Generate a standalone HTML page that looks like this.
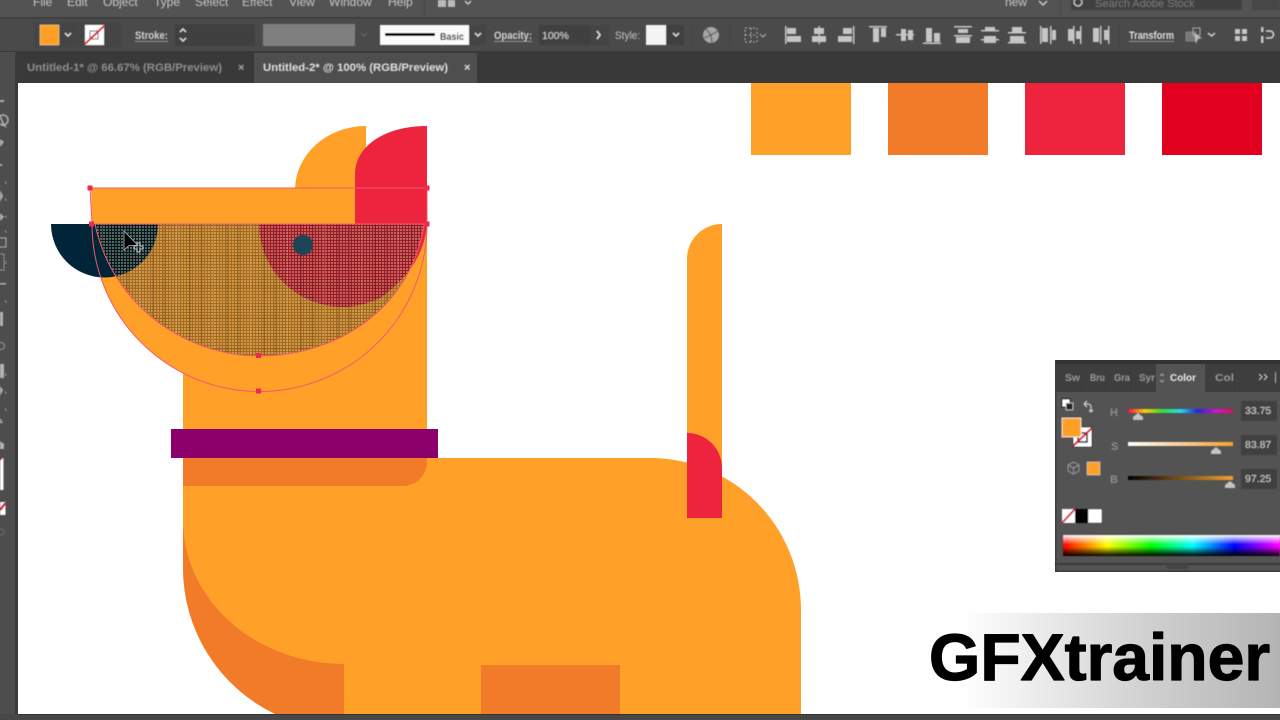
<!DOCTYPE html>
<html><head><meta charset="utf-8"><style>
html,body{margin:0;padding:0;width:1280px;height:720px;overflow:hidden;background:#4a4a4a}
svg{display:block}
text{font-family:"Liberation Sans",sans-serif}
</style></head><body>
<svg width="1280" height="720" viewBox="0 0 1280 720" xmlns="http://www.w3.org/2000/svg">
<defs>
<pattern id="h" width="3" height="3" patternUnits="userSpaceOnUse"><rect width="3" height="3" fill="rgba(0,0,0,.34)"/><rect x="1" y="1" width="2" height="2" fill="rgba(255,235,170,.36)"/></pattern>
<pattern id="pv" width="37" height="3" patternUnits="userSpaceOnUse"><rect x="4" width="2" height="3" fill="rgba(0,0,0,.12)"/><rect x="15" width="3" height="3" fill="rgba(0,0,0,.08)"/><rect x="28" width="1" height="3" fill="rgba(255,255,255,.12)"/></pattern>
<pattern id="ph" width="3" height="31" patternUnits="userSpaceOnUse"><rect y="7" width="3" height="2" fill="rgba(0,0,0,.06)"/><rect y="21" width="3" height="1" fill="rgba(255,255,255,.08)"/></pattern>
<linearGradient id="wm"><stop offset="0" stop-color="#fff"/><stop offset=".6" stop-color="#cfcfcf"/><stop offset="1" stop-color="#b4b4b4"/></linearGradient>
<linearGradient id="hue"><stop offset="0" stop-color="#f00"/><stop offset=".17" stop-color="#ff0"/><stop offset=".34" stop-color="#0f0"/><stop offset=".5" stop-color="#0ff"/><stop offset=".66" stop-color="#00f"/><stop offset=".83" stop-color="#f0f"/><stop offset="1" stop-color="#f00"/></linearGradient>
<linearGradient id="wb" x2="0" y2="1"><stop offset="0" stop-color="#fff"/><stop offset=".45" stop-color="#fff" stop-opacity="0"/><stop offset=".55" stop-color="#000" stop-opacity="0"/><stop offset="1" stop-color="#000"/></linearGradient>
<linearGradient id="hs"><stop offset="0" stop-color="#f0104a"/><stop offset=".16" stop-color="#fc0"/><stop offset=".33" stop-color="#3d3"/><stop offset=".5" stop-color="#2de"/><stop offset=".66" stop-color="#22d"/><stop offset=".85" stop-color="#d1c"/><stop offset="1" stop-color="#e01060"/></linearGradient>
<linearGradient id="ss"><stop offset="0" stop-color="#fff"/><stop offset="1" stop-color="#f7a030"/></linearGradient>
<linearGradient id="bs"><stop offset="0" stop-color="#000"/><stop offset="1" stop-color="#f7a030"/></linearGradient>
<clipPath id="hc"><path d="M95 224H424C412 306 340 356 259 356C185 356 112 305 95 224Z"/></clipPath>
<filter id="b" x="-5%" y="-5%" width="110%" height="110%"><feGaussianBlur stdDeviation=".45"/></filter>
</defs>

<!-- chrome -->
<rect width="1280" height="720" fill="#4a4a4a"/>
<rect width="1280" height="17" fill="#535353"/>
<rect y="17" width="1280" height="1.5" fill="#3d3d3d"/>
<rect y="51" width="1280" height="32" fill="#393939"/>
<rect x="0" y="52" width="16" height="668" fill="#4d4d4d"/>
<rect x="15" y="53" width="3" height="667" fill="#3a3a3a"/>
<rect x="254" y="53" width="223" height="30" fill="#4e4e4e"/>

<g filter="url(#b)">
<g fill="#c8c8c8" font-size="12">
<text x="33" y="6">File</text><text x="67" y="6">Edit</text><text x="103" y="6">Object</text><text x="154" y="6">Type</text><text x="195" y="6">Select</text><text x="242" y="6">Effect</text><text x="289" y="6">View</text><text x="329" y="6">Window</text><text x="388" y="6">Help</text>
<text x="1005" y="6">new</text>
</g>
<rect x="424" y="0" width="1" height="16" fill="#444"/>
<path d="M438 0h8v7h-8zM448 0h7v7h-7z" fill="#bbb"/>
<path d="M465 1l3 3 3-3M1039 1l4 4 4-4" stroke="#ccc" stroke-width="1.5" fill="none"/>
<rect x="1071" y="-4" width="171" height="14" rx="2" fill="#404040"/>
<text x="1095" y="7" font-size="11" fill="#777">Search Adobe Stock</text>
<circle cx="1078" cy="2" r="4" stroke="#bbb" stroke-width="1.5" fill="none"/>
<rect x="1252" y="-4" width="28" height="14" fill="#474747"/>
<rect x="1060" y="0" width="1" height="16" fill="#444"/>

<!-- control bar -->
<rect x="34" y="23" width="44" height="24" fill="#454545"/>
<rect x="40" y="25" width="19" height="20" fill="#ffa028" stroke="#f4e0c0" stroke-width=".5"/>
<path d="M65 33l3 3 3-3M111 33l3 3 3-3M242 33l3 3 3-3M475 33l3 3 3-3M673 33l3 3 3-3" stroke="#ddd" stroke-width="1.5" fill="none"/>
<rect x="79" y="23" width="42" height="24" fill="#454545"/>
<rect x="85" y="25" width="19" height="20" fill="#fff"/>
<rect x="90" y="31" width="8" height="8" fill="none" stroke="#555"/>
<path d="M85 44L104 26" stroke="#e01030" stroke-width="2"/>
<text x="135" y="39" font-size="11" font-weight="bold" fill="#d4d4d4" textLength="33" lengthAdjust="spacingAndGlyphs">Stroke:</text>
<rect x="135" y="41" width="33" height=".8" fill="#aaa"/>
<rect x="175" y="24" width="80" height="22" fill="#404040"/>
<path d="M180 32l3-3 3 3M180 38l3 3 3-3" stroke="#ddd" stroke-width="1.4" fill="none"/>
<rect x="263" y="24" width="92" height="22" fill="#7f7f7f"/>
<path d="M361 33l3 3 3-3" stroke="#5e5e5e" stroke-width="1.5" fill="none"/>
<rect x="380" y="25" width="89" height="20" fill="#fbfbfb"/>
<rect x="385" y="33" width="50" height="3" fill="#000"/>
<text x="440" y="40" font-size="10.5" font-weight="bold" fill="#222" textLength="24" lengthAdjust="spacingAndGlyphs">Basic</text>
<rect x="469" y="25" width="17" height="20" fill="#454545"/>
<path d="M475 33l3 3 3-3" stroke="#ddd" stroke-width="1.5" fill="none"/>
<text x="494" y="39" font-size="11" font-weight="bold" fill="#d4d4d4" textLength="38" lengthAdjust="spacingAndGlyphs">Opacity:</text>
<rect x="494" y="41" width="38" height=".8" fill="#aaa"/>
<rect x="539" y="25" width="52" height="20" fill="#404040"/>
<text x="542" y="39" font-size="10.5" fill="#d4d4d4">100%</text>
<rect x="591" y="25" width="18" height="20" fill="#454545"/>
<path d="M597 31l3 4-3 4" stroke="#ddd" stroke-width="1.5" fill="none"/>
<text x="615" y="39" font-size="11" fill="#c4c4c4" textLength="25" lengthAdjust="spacingAndGlyphs">Style:</text>
<rect x="646" y="25" width="20" height="20" fill="#f4f4f4"/>
<rect x="666" y="25" width="18" height="20" fill="#404040"/>
<path d="M673 33l3 3 3-3" stroke="#ddd" stroke-width="1.5" fill="none"/>
<rect x="692" y="23" width="1" height="24" fill="#444"/>
<circle cx="711" cy="35" r="8" fill="#a6a6a6"/><path d="M711 35L706 29M711 35L718 31M711 35L712 43M711 35L704 38" stroke="#5c5c5c" stroke-width="1.2"/>
<rect x="730" y="23" width="1" height="24" fill="#444"/>
<rect x="745" y="28" width="12" height="14" fill="none" stroke="#b5b5b5" stroke-dasharray="2 2"/><path d="M751 28v14M745 35h12" stroke="#b5b5b5" stroke-dasharray="2 2"/>
<path d="M760 34l3 3 3-3" stroke="#aaa" stroke-width="1.2" fill="none"/>

<!-- align icons -->
<g fill="#c6c6c6">
<rect x="785" y="26" width="1.5" height="18"/><rect x="787" y="28" width="9" height="6"/><rect x="787" y="36" width="14" height="6"/>
<rect x="818.500" y="26" width="1.500" height="18"/><rect x="814" y="28" width="10" height="6"/><rect x="812" y="36" width="14" height="6"/>
<rect x="853" y="26" width="1.500" height="18"/><rect x="843" y="28" width="9" height="6"/><rect x="838" y="36" width="14" height="6"/>
<rect x="869" y="26" width="18" height="1.500"/><rect x="873" y="28" width="6" height="14"/><rect x="881" y="28" width="5" height="9"/>
<rect x="896" y="34" width="18" height="1.500"/><rect x="901" y="29" width="5" height="12"/><rect x="908" y="30" width="5" height="10"/>
<rect x="923" y="42.500" width="18" height="1.500"/><rect x="926" y="28" width="6" height="14"/><rect x="934" y="33" width="6" height="9"/>
<rect x="954" y="26" width="18" height="1.500"/><rect x="958" y="29" width="10" height="4"/><rect x="954" y="35" width="18" height="1.500"/><rect x="956" y="37" width="14" height="6"/>
<rect x="981" y="30" width="18" height="1.500"/><rect x="985" y="27" width="10" height="3"/><rect x="981" y="39" width="18" height="1.500"/><rect x="984" y="36" width="12" height="7"/>
<rect x="1008" y="32" width="18" height="1.500"/><rect x="1012" y="27" width="10" height="5"/><rect x="1008" y="42" width="18" height="1.500"/><rect x="1010" y="36" width="14" height="6"/>
<rect x="1040" y="26" width="1.500" height="18"/><rect x="1042" y="28" width="6" height="14"/><rect x="1050" y="26" width="1.500" height="18"/><rect x="1052" y="30" width="4" height="10"/>
<rect x="1073" y="26" width="1.500" height="18"/><rect x="1068" y="29" width="5" height="12"/><rect x="1080" y="26" width="1.500" height="18"/><rect x="1076" y="31" width="4" height="8"/>
<rect x="1093" y="28" width="6" height="14"/><rect x="1100" y="26" width="1.500" height="18"/><rect x="1104" y="30" width="4" height="10"/><rect x="1108" y="26" width="1.500" height="18"/>
<rect x="1235" y="29" width="5" height="5"/><rect x="1242" y="29" width="5" height="5"/><rect x="1235" y="36" width="5" height="5"/><rect x="1242" y="36" width="5" height="5"/>
<rect x="1261" y="27" width="2.500" height="5"/><rect x="1261" y="36" width="2.500" height="7"/>
</g>
<path d="M1266 31h4a3.500 3.500 0 0 1 0 7h-4" fill="none" stroke="#c6c6c6" stroke-width="1.800"/>
<rect x="1119" y="23" width="1" height="24" fill="#444"/>
<text x="1129" y="39" font-size="11" font-weight="bold" fill="#e0e0e0" textLength="45" lengthAdjust="spacingAndGlyphs">Transform</text>
<rect x="1129" y="41" width="45" height=".8" fill="#aaa"/>
<rect x="1186" y="32" width="10" height="9" fill="#777" stroke="#999" stroke-width=".6"/>
<rect x="1193" y="28" width="7" height="7" fill="none" stroke="#aaa"/>
<path d="M1194 33l8 5-4 1-2 5z" fill="#bbb"/>
<path d="M1208 33l3.500 3 3.500-3" stroke="#ccc" stroke-width="1.500" fill="none"/>

<!-- tabs -->
<text x="27" y="71" font-size="11" font-weight="bold" fill="#8f8f8f" textLength="195" lengthAdjust="spacingAndGlyphs">Untitled-1* @ 66.67% (RGB/Preview)</text>
<text x="238" y="71" font-size="11" font-weight="bold" fill="#a8a8a8">×</text>
<text x="263" y="71" font-size="11" font-weight="bold" fill="#e2e2e2" textLength="185" lengthAdjust="spacingAndGlyphs">Untitled-2* @ 100% (RGB/Preview)</text>
<text x="464" y="71" font-size="11" font-weight="bold" fill="#e6e6e6">×</text>

<!-- left toolbar marks -->
<g fill="#b4b4b4">
<rect x="0" y="100" width="4" height="2"/><path d="M0 116a5 5 0 1 1 0 8l5 2-2-3z" fill="none" stroke="#b4b4b4" stroke-width="1.500"/>
<path d="M0 139l4 3-4 5z"/><rect x="0" y="164" width="2" height="2"/>
<path d="M5 181l2 3-2-1zM5 198l2 3-2-1zM0 190l3 6-3 6zM5 215l2 3-2-1zM0 213l4 4-4 4zM5 230l2 3-2-1zM5 261l2 3-2-1z"/>
<rect x="-3" y="238" width="9" height="9" fill="none" stroke="#b4b4b4"/>
<rect x="-2" y="254" width="6" height="16" fill="none" stroke="#b4b4b4" stroke-dasharray="2 1"/>
<rect x="0" y="283" width="6" height="1.500"/><path d="M5 300l2 3-2-1z"/>
<rect x="0" y="312" width="3" height="14"/>
<circle cx="1" cy="346" r="3.500" fill="none" stroke="#999"/>
<rect x="0" y="364" width="4" height="14"/><path d="M5 373l2 3-2-1zM5 408l2 3-2-1zM5 391l2 3-2-1z"/>
<path d="M0 386l3 4-3 6zM0 418l3 5H0zM0 441l4 3v5H0z"/>
</g>
<rect x="0" y="458" width="3.500" height="32" fill="#fff"/>
<path d="M0 458h3l-3 3z" fill="#d01030"/>
<rect x="0" y="502" width="5.500" height="13" fill="#fff"/>
<path d="M0 510L5.500 503" stroke="#d01030" stroke-width="2.500"/>
<circle cx="1" cy="532" r="3" fill="none" stroke="#6a6a6a"/>
</g>

<!-- canvas -->
<rect x="18" y="83" width="1262" height="631" fill="#fff"/>
<rect x="751" y="83" width="100" height="72" fill="#ffa028"/>
<rect x="888" y="83" width="100" height="72" fill="#f27b2a"/>
<rect x="1025" y="83" width="100" height="72" fill="#ee243e"/>
<rect x="1162" y="83" width="100" height="72" fill="#e2001f"/>

<!-- dog -->
<path d="M295 190A71 64 0 0 1 366 126V190Z" fill="#ffa028"/>
<path d="M91 188H427V224H92Z" fill="#ffa028"/>
<path d="M355 226V174C355 146 385 126 427 126V226Z" fill="#ee243e"/>
<rect x="183" y="224" width="244" height="262" fill="#ffa028"/>
<path d="M92 224H427A167.500 167.500 0 0 1 92 224Z" fill="#ffa028"/>
<path d="M687 490V259A35 35 0 0 1 722 224V490Z" fill="#ffa028"/>
<path d="M183 458H650A151 152 0 0 1 801 610V714H275A162 162 0 0 1 183 568Z" fill="#ffa028"/>
<path d="M183 458H427V462A24 24 0 0 1 403 486H183Z" fill="#f27b2a"/>
<path d="M183 520A161 144 0 0 0 344 664V714H275A162 162 0 0 1 183 568Z" fill="#f27b2a"/>
<rect x="481" y="665" width="139" height="49" fill="#f27b2a"/>
<rect x="171" y="429" width="267" height="29" fill="#8b006b"/>
<path d="M687 518V433A35 35 0 0 1 722 468V518Z" fill="#ee243e"/>
<path d="M51 224H158A53.500 53.500 0 0 1 51 224Z" fill="#002438"/>
<path d="M259 224H427C424 262 400 282 382 297C370 303 356 307 343 307A84 83 0 0 1 259 224Z" fill="#ee243e"/>
<g clip-path="url(#hc)">
<rect x="90" y="224" width="340" height="134" fill="url(#h)"/>
<rect x="90" y="224" width="340" height="134" fill="url(#pv)"/>
<rect x="90" y="224" width="340" height="134" fill="url(#ph)"/>
</g>
<circle cx="303" cy="245" r="10" fill="#1d4558"/>
<g fill="none" stroke="#f25a6c" stroke-width="1">
<path d="M90 188H427V224"/>
<path d="M90 188L92 224A167.500 167.500 0 0 0 427 224"/>
<path d="M92 224H427"/>
<path d="M95 224C112 305 185 356 259 356C340 356 412 306 424 224"/>
</g>
<g fill="#ee2a50">
<rect x="87.500" y="185.500" width="5" height="5"/><rect x="424.500" y="185.500" width="5" height="5"/><rect x="89" y="221.500" width="5" height="5"/><rect x="424.500" y="221.500" width="5" height="5"/><rect x="256" y="353" width="5" height="5"/><rect x="256" y="388.500" width="5" height="5"/>
</g>
<!-- cursor -->
<path d="M124 231V250L129 245.500L138 245.500Z" fill="#000" stroke="#b4c0c8" stroke-width=".8"/>
<path d="M138 245h3v3h3v3h-3v3h-3v-3h-3v-3h3z" fill="none" stroke="#c8ccc8" stroke-width=".9" transform="translate(-1,-2)"/>

<!-- colour panel -->
<rect x="1055" y="360" width="225" height="212" fill="#535353"/>
<rect x="1055" y="360" width="225" height="4" fill="#333"/>
<rect x="1055" y="364" width="225" height="28" fill="#3e3e3e"/>
<rect x="1156" y="364" width="49" height="28" fill="#535353"/>
<g fill="#3a3a3a"><rect x="1081" y="364" width="1" height="28"/><rect x="1105" y="364" width="1" height="28"/><rect x="1130" y="364" width="1" height="28"/><rect x="1234" y="364" width="1" height="28"/></g>
<g filter="url(#b)">
<g font-size="10.500" fill="#9b9b9b" font-weight="bold">
<text x="1065" y="381" textLength="15" lengthAdjust="spacingAndGlyphs">Sw</text><text x="1090" y="381" textLength="15" lengthAdjust="spacingAndGlyphs">Bru</text><text x="1114" y="381" textLength="16" lengthAdjust="spacingAndGlyphs">Gra</text><text x="1139" y="381" textLength="16" lengthAdjust="spacingAndGlyphs">Syr</text><text x="1215" y="381" textLength="19" lengthAdjust="spacingAndGlyphs">Col</text>
</g>
<text x="1170" y="381" font-size="10.500" font-weight="bold" fill="#eee" textLength="26" lengthAdjust="spacingAndGlyphs">Color</text>
<path d="M1160 376l2-2 2 2M1160 380l2 2 2-2" stroke="#aaa" fill="none"/>
<path d="M1259 374l3 3-3 3M1264 374l3 3-3 3" stroke="#ccc" stroke-width="1.200" fill="none"/>
<rect x="1275" y="372" width="1" height="11" fill="#bbb"/>

<rect x="1062" y="399" width="8" height="8" fill="#fff" stroke="#111"/><rect x="1066" y="403" width="7" height="7" fill="#222" stroke="#ddd" stroke-width=".8"/>
<path d="M1084 404h4a3 3 0 0 1 3 3v5M1084 404l3-3M1084 404l3 3M1091 412l-2-2M1091 412l2-2" stroke="#ccc" stroke-width="1.300" fill="none"/>
<rect x="1073" y="427" width="19" height="20" fill="#fff" stroke="#333"/>
<rect x="1078" y="433" width="9" height="9" fill="none" stroke="#111" stroke-width="1.500"/>
<path d="M1073 446L1092 428" stroke="#d01030" stroke-width="2"/>
<rect x="1062" y="418" width="19" height="19" fill="#ffa028" stroke="#f3e6d0"/>
<path d="M1073 465l5.500-3 5.500 3v6l-5.500 3-5.500-3zM1073 465l5.500 3 5.500-3M1078.500 468v6" transform="translate(-5,0)" stroke="#999" fill="none"/>
<rect x="1087" y="462" width="13" height="13" fill="#ffa028" stroke="#ddd" stroke-width=".6"/>

<g font-size="11" font-weight="bold" fill="#8e8e8e"><text x="1110" y="416">H</text><text x="1111" y="450">S</text><text x="1110" y="483">B</text></g>
<rect x="1128" y="409" width="105" height="4" fill="url(#hs)"/>
<rect x="1128" y="442" width="105" height="4" fill="url(#ss)"/>
<rect x="1128" y="476" width="105" height="4" fill="url(#bs)"/>
<path d="M1133 420v-3l5-4 5 4v3zM1211 454v-3l5-4 5 4v3zM1225 488v-3l5-4 5 4v3z" fill="#c4c4c4"/>
<rect x="1241" y="401" width="36" height="20" rx="1" fill="#3f3f3f"/>
<rect x="1241" y="435" width="36" height="20" rx="1" fill="#3f3f3f"/>
<rect x="1241" y="469" width="36" height="20" rx="1" fill="#3f3f3f"/>
<g font-size="10.500" fill="#cfcfcf"><text x="1245" y="414">33.75</text><text x="1245" y="448">83.87</text><text x="1245" y="482">97.25</text></g>

<rect x="1062" y="509" width="13" height="14" fill="#fff"/><path d="M1062 523L1075 509" stroke="#d01030" stroke-width="2"/>
<rect x="1075" y="509" width="13" height="14" fill="#000"/>
<rect x="1088" y="509" width="14" height="14" fill="#fff" stroke="#333" stroke-width=".5"/>
<rect x="1063" y="535" width="260" height="21" fill="url(#hue)"/>
<rect x="1063" y="535" width="217" height="21" fill="url(#wb)"/>
<rect x="1055" y="563" width="225" height="2" fill="#3a3a3a"/>
<rect x="1167" y="564" width="21" height="5" fill="#444"/>
</g>
<rect x="1055" y="360" width="1.500" height="212" fill="#3c3c3c"/>
<rect x="1055" y="570.500" width="225" height="1.500" fill="#3c3c3c"/>

<!-- watermark -->
<rect x="960" y="613" width="320" height="95" fill="url(#wm)"/>
<text x="929" y="680" font-size="66" font-weight="bold" fill="#000" stroke="#000" stroke-width="1.200" stroke-linejoin="round" textLength="341">GFXtrainer</text>

<!-- bottom bar -->
<rect x="0" y="714" width="1280" height="6" fill="#474747"/>
<rect x="18" y="714" width="1262" height="1" fill="#333"/>
</svg>
</body></html>
